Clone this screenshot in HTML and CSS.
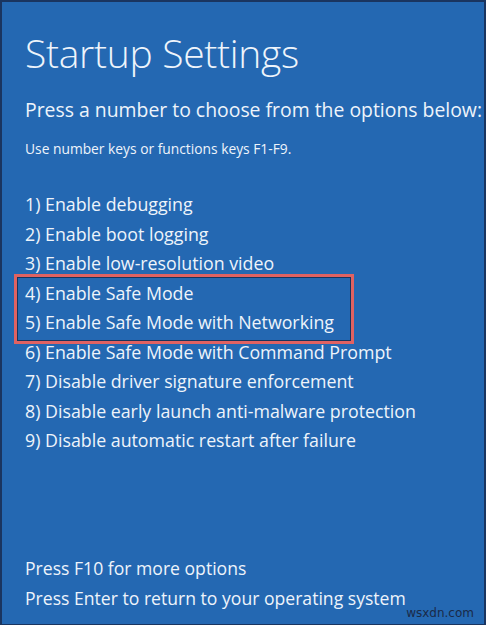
FILE: index.html
```html
<!DOCTYPE html>
<html>
<head>
<meta charset="utf-8">
<link rel="stylesheet" href="styles.css">
</head>
<body>
<div class="screen">
  <h1 class="title">Startup Settings</h1>
  <p class="lead">Press a number to choose from the options below:</p>
  <p class="hint">Use number keys or functions keys F1-F9.</p>
  <ul class="options">
    <li>1) Enable debugging</li>
    <li>2) Enable boot logging</li>
    <li>3) Enable low-resolution video</li>
    <li class="hl-group">
      <div class="hl-box"></div>
      <div>4) Enable Safe Mode</div>
      <div>5) Enable Safe Mode with Networking</div>
    </li>
    <li>6) Enable Safe Mode with Command Prompt</li>
    <li>7) Disable driver signature enforcement</li>
    <li>8) Disable early launch anti-malware protection</li>
    <li>9) Disable automatic restart after failure</li>
  </ul>
  <div class="footer">
    <p>Press F10 for more options</p>
    <p>Press Enter to return to your operating system</p>
  </div>
  <div class="watermark">wsxdn.com</div>
</div>
</body>
</html>
```
FILE: styles.css
```css
html, body {
  margin: 0;
  padding: 0;
}
body {
  width: 486px;
  height: 625px;
  overflow: hidden;
  background: #1c3b6a;
}
.screen {
  position: relative;
  box-sizing: border-box;
  width: 486px;
  height: 625px;
  background: #2468b2;
  border: 2px solid #1a3560;
  border-bottom-width: 1px;
  padding: 0 0 0 23px;
  color: #eef4fb;
  font-family: "Open Sans", "Noto Sans", sans-serif;
  display: flex;
  flex-direction: column;
}
.title {
  margin: 26px 0 0 0;
  font-size: 39px;
  font-weight: 300;
  line-height: 50px;
  letter-spacing: -0.3px;
}
.lead {
  margin: 19px 0 0 0;
  font-size: 19.4px;
  line-height: 26px;
  white-space: nowrap;
}
.hint {
  margin: 16px 0 0 0;
  font-size: 13.8px;
  line-height: 20px;
}
.options {
  list-style: none;
  margin: 31px 0 0 0;
  padding: 0;
  font-size: 17.8px;
  line-height: 29.5px;
}
.hl-group {
  position: relative;
}
.hl-box {
  position: absolute;
  box-sizing: border-box;
  left: -11px;
  top: -5px;
  width: 340px;
  height: 70px;
  border: 3px solid #e06262;
  box-shadow: inset 0 0 0 1px #17345e;
}
.footer {
  margin-top: auto;
  margin-bottom: 11px;
  font-size: 17.6px;
  line-height: 30px;
}
.footer p {
  margin: 0;
}
.watermark {
  position: absolute;
  right: 10px;
  bottom: 4px;
  font-family: "DejaVu Sans", sans-serif;
  font-size: 12px;
  color: #1a2a48;
}
```
